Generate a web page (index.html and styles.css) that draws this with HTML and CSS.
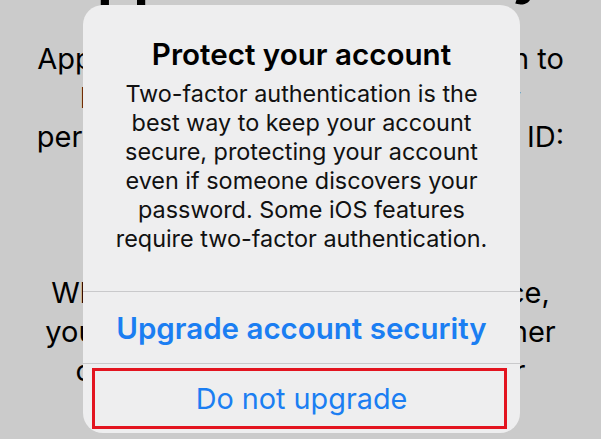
FILE: index.html
```html
<!DOCTYPE html>
<html>
<head>
<meta charset="utf-8">
<link rel="stylesheet" href="styles.css">
</head>
<body>
<div class="screen">
  <div class="page">
    <h1 class="page-title">Apple ID Security</h1>
    <p class="page-text">Apple uses this security information to<br>log in via your Apple ID securely<br>personal information on your Apple ID:</p>
    <p class="page-text gap">When you sign in with a new device,<br>you'll need to verify it with your other<br>computer, or any trusted number</p>
  </div>
  <div class="alert">
    <div class="alert-body">
      <div class="alert-title">Protect your account</div>
      <div class="alert-message">Two-factor authentication is the<br>best way to keep your account<br>secure, protecting your account<br>even if someone discovers your<br>password. Some iOS features<br>require two-factor authentication.</div>
    </div>
    <div class="alert-btn primary">Upgrade account security</div>
    <div class="alert-btn secondary">Do not upgrade
      <div class="highlight"></div>
    </div>
  </div>
</div>
</body>
</html>
```
FILE: styles.css
```css
html, body {
  margin: 0;
  padding: 0;
}
body {
  font-family: "Inter", "Noto Sans", sans-serif;
  color: #000;
}
.screen {
  position: relative;
  width: 601px;
  height: 439px;
  overflow: hidden;
  background: #cbcbcb;
}
.page {
  text-align: center;
  padding-top: 1px;
}
.page-title {
  margin: -54px 0 0;
  height: 52px;
  font-size: 56px;
  line-height: 52px;
  letter-spacing: 1px;
  font-weight: 700;
  white-space: nowrap;
}
.page-text {
  margin: 40px 0 0;
  font-size: 29px;
  line-height: 39px;
  white-space: nowrap;
}
.page-text.gap {
  margin-top: 117px;
}
.alert {
  position: absolute;
  left: 83px;
  top: 5px;
  width: 437px;
  height: 428px;
  background: #eeeeef;
  border-radius: 20px;
  display: flex;
  flex-direction: column;
  text-align: center;
}
.alert-body {
  padding: 31px 0 38px;
  border-bottom: 1px solid #c9c9cb;
}
.alert-title {
  font-size: 29.6px;
  line-height: 36px;
  font-weight: 600;
}
.alert-message {
  margin-top: 7px;
  font-size: 23.4px;
  line-height: 29px;
  color: #111;
}
.alert-btn {
  position: relative;
  display: flex;
  align-items: center;
  justify-content: center;
  color: #1b7ef2;
}
.alert-btn.primary {
  height: 71px;
  font-size: 29.5px;
  font-weight: 600;
  border-bottom: 1px solid #c9c9cb;
}
.alert-btn.secondary {
  flex: 1;
  font-size: 28.8px;
  font-weight: 400;
}
.highlight {
  position: absolute;
  left: 9px;
  top: 4px;
  width: 409px;
  height: 55px;
  border: 3px solid #e3141f;
}
```
